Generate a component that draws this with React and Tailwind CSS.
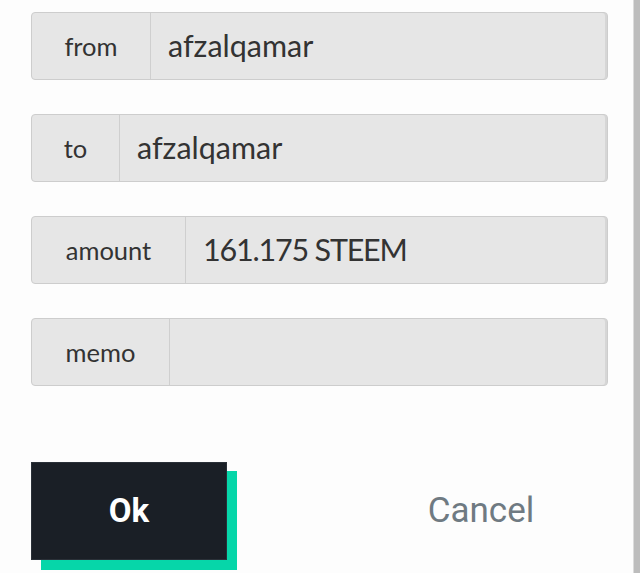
import React from 'react';

const FIELDS = [
  { label: 'from', width: 'w-[119px]', value: 'afzalqamar', tight: false },
  { label: 'to', width: 'w-[88px]', value: 'afzalqamar', tight: false },
  { label: 'amount', width: 'w-[154px]', value: '161.175 STEEM', tight: true },
  { label: 'memo', width: 'w-[138px]', value: '', tight: false },
];

export default function App() {
  return (
    <div className="flex w-[640px] h-[573px] overflow-hidden bg-[#fdfdfd]" style={{ fontFamily: 'Lato, "Noto Sans", sans-serif' }}>
      <div className="flex-1 pl-[31px] pr-[25px] pt-[12px]">
        <div className="flex flex-col gap-[34px]">
          {FIELDS.map(({ label, width, value, tight }) => (
            <div key={label} className="flex h-[68px] rounded-[4px] border border-[#cdcdcd] bg-[#e6e6e6] shadow-[inset_-2px_0_0_#d6d6d6]">
              <div className={`${width} shrink-0 flex items-center justify-center border-r border-[#cfcfcf] text-[25.5px] text-[#333]`}>
                {label}
              </div>
              <div className={`flex-1 flex items-center pl-[17px] text-[30.5px] text-[#333] ${tight ? 'tracking-[-1.2px]' : ''}`}>
                {value}
              </div>
            </div>
          ))}
        </div>

        {/* ── ACTIONS ── */}
        <div className="flex justify-between mt-[76px]">
          <div className="relative w-[206px] h-[108px]">
            <div className="absolute left-[10px] top-[9px] w-[196px] h-[99px] bg-[#06d6a9]" />
            <button className="absolute left-0 top-0 w-[196px] h-[98px] bg-[#1a1f26] border border-[#2a3038] text-white text-[33px] font-bold" style={{ fontFamily: 'Roboto, sans-serif' }}>
              Ok
            </button>
          </div>
          <button className="w-[254px] h-[98px] text-[#6f7a82] text-[35px]" style={{ fontFamily: 'Roboto, sans-serif' }}>
            Cancel
          </button>
        </div>
      </div>
      <div className="w-[7px] h-full bg-[#bdbdbd] border-l border-[#dcdcdc]" />
    </div>
  );
}
